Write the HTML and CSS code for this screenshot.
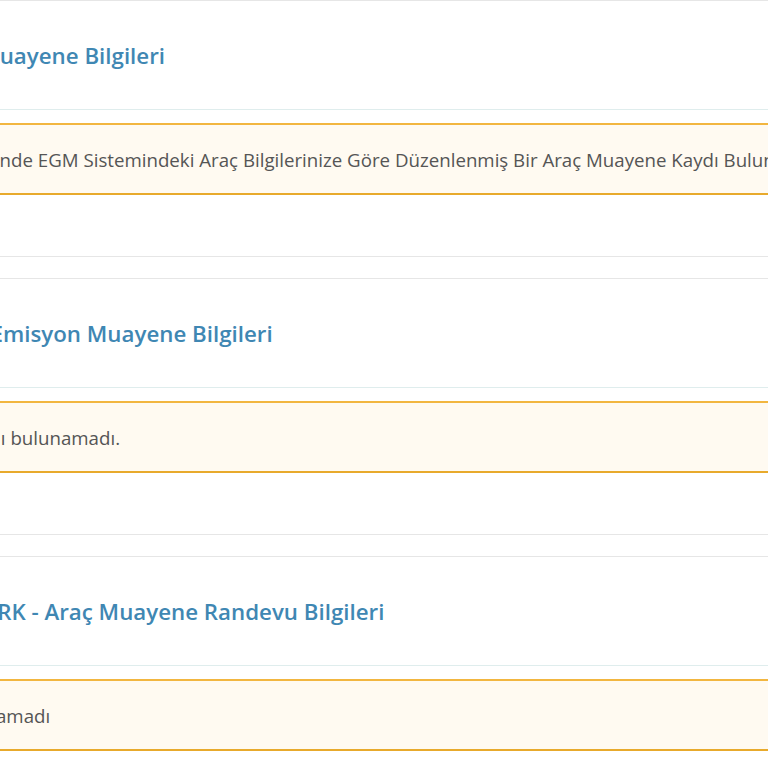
FILE: index.html
```html
<!DOCTYPE html>
<html lang="tr">
<head>
    <meta charset="UTF-8">
    <meta name="viewport" content="width=device-width, initial-scale=1.0">
    <title>Araç Muayene Bilgileri</title>
    <link rel="stylesheet" href="styles.css">
</head>
<body>
    <div class="page">
        <div class="panel">
            <div class="panel-heading">
                <h2>Araç Muayene Bilgileri</h2>
            </div>
            <div class="alert">Ana Sisteminde EGM Sistemindeki Araç Bilgilerinize Göre Düzenlenmiş Bir Araç Muayene Kaydı Bulunamadı.</div>
        </div>

        <div class="panel">
            <div class="panel-heading">
                <h2>Egzoz Emisyon Muayene Bilgileri</h2>
            </div>
            <div class="alert">Ölçüm kaydı bulunamadı.</div>
        </div>

        <div class="panel">
            <div class="panel-heading">
                <h2>TÜVTÜRK - Araç Muayene Randevu Bilgileri</h2>
            </div>
            <div class="alert">Kayıt bulunamadı</div>
        </div>
    </div>
</body>
</html>
```

FILE: styles.css
```css
body {
    margin: 0;
    background-color: #fff;
    font-family: "Open Sans", Arial, sans-serif;
    overflow: hidden;
}

.page {
    margin-left: -110px;
    width: 1100px;
}

.panel {
    border-top: 1px solid #e6e6e6;
    border-bottom: 1px solid #e6e6e6;
    padding-bottom: 61px;
    margin-bottom: 21px;
}

.panel-heading {
    height: 108px;
    display: flex;
    align-items: center;
    padding-left: 35px;
    border-bottom: 1px solid #dfeded;
    margin-bottom: 13px;
}

.panel-heading h2 {
    margin: 0;
    font-size: 22.3px;
    font-weight: 600;
    color: #3f87b3;
    white-space: nowrap;
}

.alert {
    height: 68px;
    display: flex;
    align-items: center;
    padding-left: 8px;
    background-color: #fffaf1;
    border-top: 2px solid #f2b640;
    border-bottom: 2px solid #e8aa2c;
    color: #555;
    font-size: 18.7px;
    white-space: nowrap;
}
```
